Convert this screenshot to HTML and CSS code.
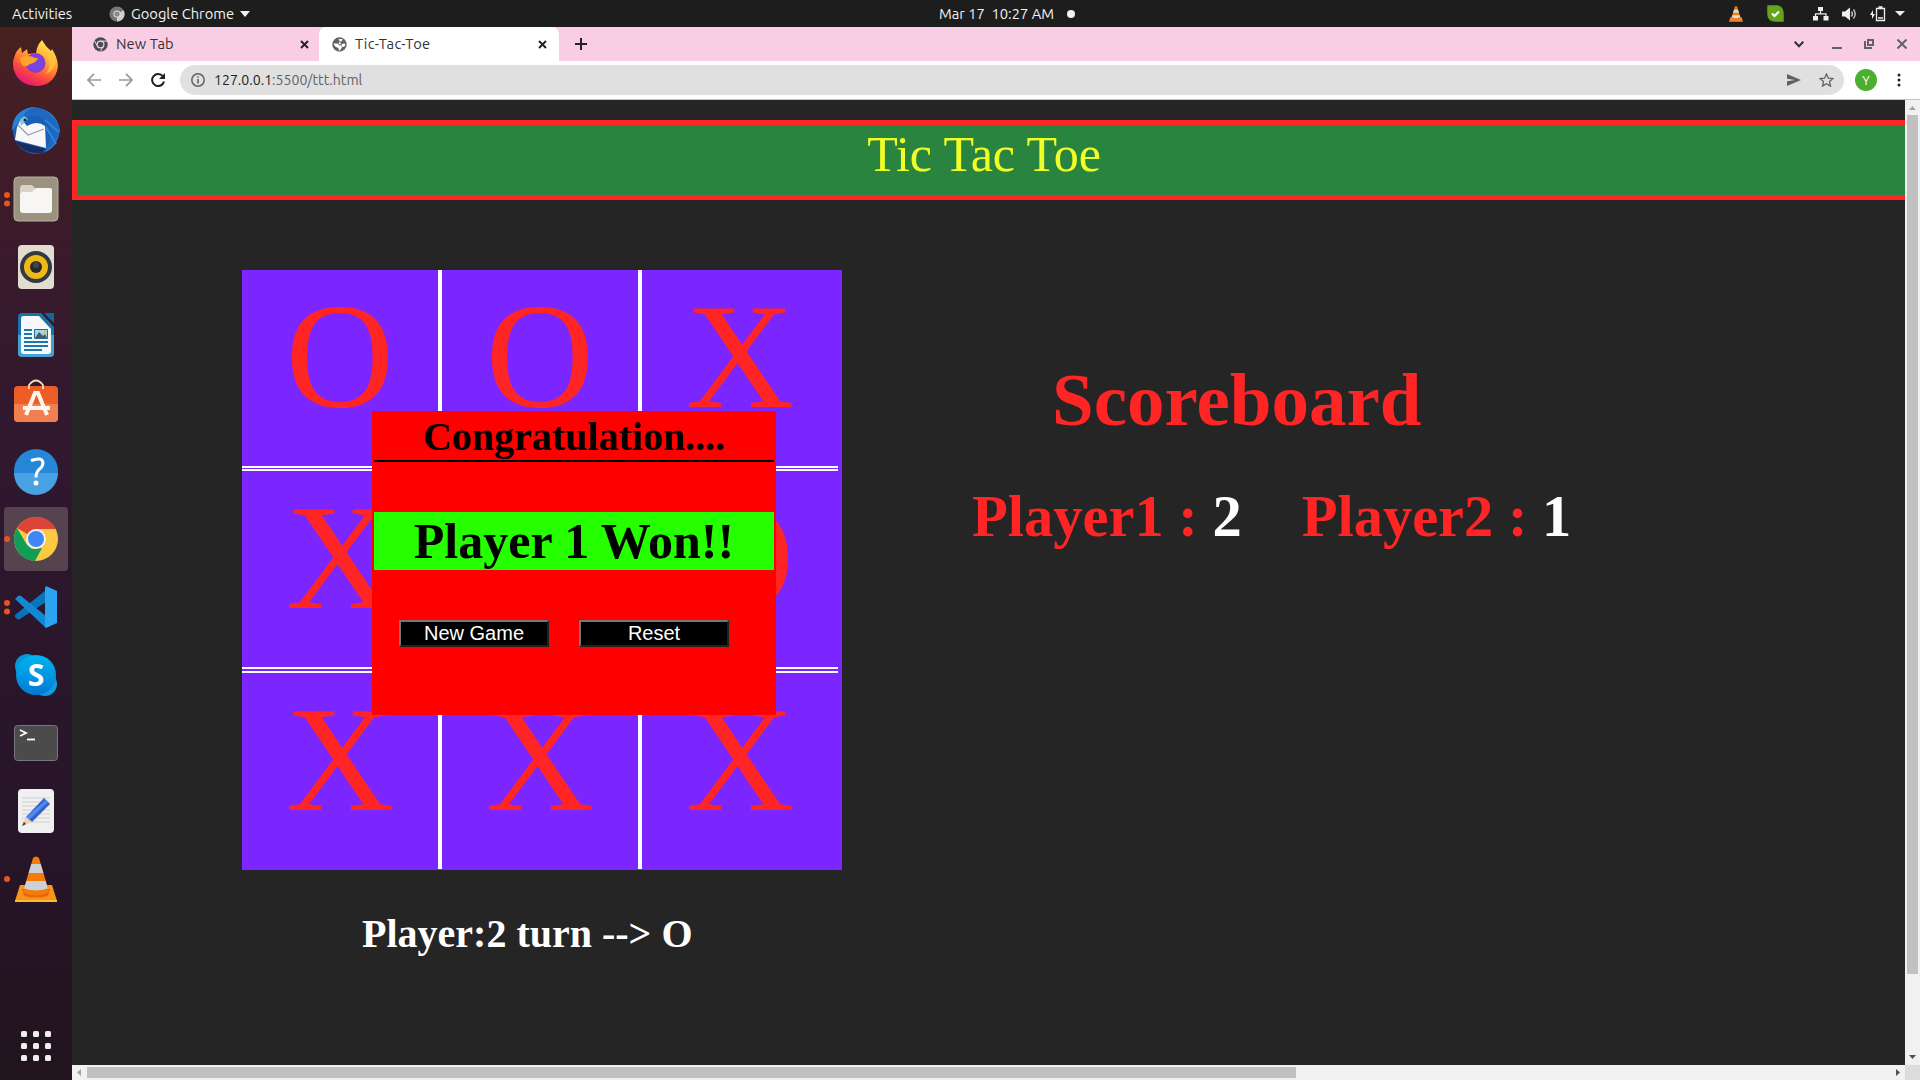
FILE: index.html
```html
<!DOCTYPE html>
<html lang="en">
<head>
<meta charset="utf-8">
<title>Tic-Tac-Toe</title>
<link rel="stylesheet" href="styles.css">
</head>
<body>
<div class="desktop">
  <header class="topbar">
    <span class="activities">Activities</span>
    <svg class="app-icon" width="16" height="16" viewBox="0 0 16 16"><circle cx="8" cy="8" r="7.6" fill="#777"/><path d="M8 8L14.6 4.3A7.6 7.6 0 0 1 8 15.6Z" fill="#d0d0d0"/><circle cx="8" cy="8" r="3.6" fill="#ddd"/><circle cx="8" cy="8" r="2.6" fill="#888"/></svg>
    <span class="app-name">Google Chrome</span>
    <svg class="caret" width="10" height="6" viewBox="0 0 10 6"><path d="M0 0h10L5 6z" fill="#f2f2f2"/></svg>
    <div class="clock"><span>Mar 17&nbsp; 10:27 AM</span><i class="dot"></i></div>
    <div class="tray">
      <svg width="14" height="16" viewBox="0 0 42 48"><path d="M4 34h34l4 13H0z" fill="#f58220"/><path d="M18 1h6l11 36q-14 6-28 0z" fill="#f07c12"/><path d="M15 11h12l3 9H12zM10 28h22l2 6q-13 5-26 0z" fill="#ddd"/></svg>
      <svg class="t-skype" width="17" height="17" viewBox="0 0 17 17"><path d="M1 1h9q6 1 6 8v7H9Q1 16 1 9z" fill="#64a51c" stroke="#64a51c" stroke-width="1.5" stroke-linejoin="round"/><path d="M5 8.5l2.5 2.5L12 6.5" fill="none" stroke="#fff" stroke-width="2"/></svg>
      <svg class="t-net" width="16" height="14" viewBox="0 0 16 14"><path d="M5 0h5v4H5zM0 9h5v4.500H0zM10.500 9h5v4.500h-5z" fill="#eee"/><path d="M7.500 4v3M2.500 9V6.800h10.500V9" fill="none" stroke="#eee" stroke-width="1.200"/></svg>
      <svg class="t-vol" width="16" height="14" viewBox="0 0 16 14"><path d="M0 4.500h3l5-4v13l-5-4H0z" fill="#eee"/><path d="M9.500 4.500q2 2.500 0 5M11.500 2.500q3.500 4.500 0 9" fill="none" stroke="#ccc" stroke-width="1.300"/></svg>
      <svg class="t-bat" width="16" height="16" viewBox="0 0 16 16"><path d="M3 4L0 9h2v4l3-5H3z" fill="#eee"/><path d="M6.500 2.500h8v12h-8zM8.500 1h4M8 12h5" fill="none" stroke="#eee" stroke-width="1.300"/></svg>
      <svg class="t-caret" width="10" height="5" viewBox="0 0 10 5"><path d="M0 0h10L5 5z" fill="#eee"/></svg>
    </div>
  </header>
  <div class="workspace">
    <nav class="dock">
      <div class="slot"><svg width="48" height="48" viewBox="0 0 48 48">
        <defs>
          <linearGradient id="fx" x1=".8" y1="0" x2=".3" y2="1"><stop offset="0" stop-color="#fff44f"/><stop offset=".4" stop-color="#ffa436"/><stop offset=".7" stop-color="#ff4e3a"/><stop offset="1" stop-color="#e3107f"/></linearGradient>
          <radialGradient id="fp"><stop offset="0" stop-color="#6a50e8"/><stop offset="1" stop-color="#8a3cd0"/></radialGradient>
        </defs>
        <path d="M3 16Q4 12 9 8l1 6 5-4 1 5 8-1Q25 6 30 1q3 6 9 11l1-2q8 12 5 22-5 15-21 15Q8 46 3 34-1 25 3 16z" fill="url(#fx)"/><circle cx="23.500" cy="24" r="10" fill="url(#fp)"/><path d="M8 19q8-4 15 0l3 0q-2 5-8 6-3 3-6 2-4-2-4-8z" fill="#ffa52c"/><path d="M33 15q9 11 0 20 12-3 10-18z" fill="#ffc83b" opacity=".7"/></svg></div>
      <div class="slot"><svg width="48" height="48" viewBox="0 0 48 48">
        <circle cx="24" cy="24" r="23" fill="#1b5eb5"/><path d="M0 24Q0 4 20 0q24 2 28 23-2 16-14 22 12-24-4-36Q14 4 0 24z" fill="#2b82d4"/><path d="M9 14q12-11 26 1 8 12-2 29Q48 36 47 20 38 0 20 1q-8 3-11 13z" fill="#1f68bf"/><path d="M33 13l14 12M34 20l10 17" stroke="#2e86d8" stroke-width="2"/><path d="M5 20l4-8 6 7q10-6 18 0l1 22L3 33z" fill="#f7f7f9"/><path d="M6 18l10 10 16-6" fill="none" stroke="#9a9da5" stroke-width="1.200"/><path d="M3 34l31 8-4 4Q12 48 3 34z" fill="#182b63"/><path d="M8 13l4-4 4 3-7 7z" fill="#7ac4ed"/><circle cx="13" cy="13" r="1.500" fill="#123"/></svg></div>
      <div class="slot"><i class="mark two"></i><svg width="48" height="48" viewBox="0 0 48 48">
        <rect x="2" y="2" width="44" height="44" rx="4" fill="#9b937f" stroke="#b8b19e"/><path d="M8 14q0-4 3-4h9l4 4h13q3 0 3 3v8H8z" fill="#d8d3c4"/><path d="M10 17h10l4-4h14q2 0 2 2v20q0 3-3 3H11q-3 0-3-3V19z" fill="#f7f6f3"/></svg></div>
      <div class="slot"><svg width="48" height="48" viewBox="0 0 48 48">
        <rect x="6" y="2" width="36" height="44" rx="4" fill="#e2ddd1"/><circle cx="24" cy="24" r="16" fill="#353a42"/><circle cx="24" cy="24" r="12" fill="#efba19"/><circle cx="24" cy="24" r="6" fill="#29292b"/><circle cx="24" cy="22" r="3" fill="#444"/></svg></div>
      <div class="slot"><svg width="48" height="48" viewBox="0 0 48 48">
        <path d="M10 2h19l13 14v26q0 4-4 4H10q-4 0-4-4V6q0-4 4-4z" fill="#1673ac"/><path d="M6 24h36v18q0 4-4 4H10q-4 0-4-4z" fill="#45a1d2"/><path d="M32 2h10v10z" fill="#12679d"/><path d="M11 5h16l12 13v22q0 3-3 3H12q-3 0-3-3V8q0-3 2-3z" fill="#f7f8f9"/><path d="M12 19h8M12 23h8M12 27h8M12 31h24M12 35h24M12 39h18" stroke="#1979af" stroke-width="2"/><path d="M22.500 18.500h13v9h-13z" fill="#9ed6f1" stroke="#196e9f"/><path d="M23 27l4-6 4 4 2-2 2 4z" fill="#555"/><circle cx="33" cy="21" r="1.500" fill="#f3c02c"/></svg></div>
      <div class="slot"><svg width="48" height="48" viewBox="0 0 48 48">
        <rect x="2" y="7" width="44" height="36" rx="4" fill="#ed5e27"/><path d="M2 25h44v14q0 4-4 4H6q-4 0-4-4z" fill="#f17f50"/><path d="M17 10V6q7-9 14 0v4" fill="none" stroke="#f4dfb4" stroke-width="1.800"/><path d="M14 36l9-22h3l9 22M11 29h27" fill="none" stroke="#fff6ee" stroke-width="4"/></svg></div>
      <div class="slot"><svg width="48" height="48" viewBox="0 0 48 48"><circle cx="24" cy="24" r="22" fill="#2686d8"/><path d="M2 26h44a22 22 0 0 1-44 0z" fill="#48a1e2"/><path d="M19 13.500q11-4 12 2 0 4-4 7-3 3-3 8" fill="none" stroke="#fff" stroke-width="3"/><circle cx="24" cy="36" r="2.500" fill="#fff"/></svg></div>
      <div class="slot active"><i class="mark"></i><svg width="48" height="48" viewBox="0 0 48 48">
        <circle cx="24" cy="24" r="22" fill="#fdc93e"/><path d="M24 24L5 13a22 22 0 0 1 39 1H24z" fill="#dc4437"/><path d="M5 13l10 17 5 4 10-1-7 13A22 22 0 0 1 5 13z" fill="#109d58"/><circle cx="24" cy="24" r="10" fill="#f3f3f3"/><circle cx="24" cy="24" r="8" fill="#4285f4"/></svg></div>
      <div class="slot"><i class="mark two"></i><svg width="48" height="48" viewBox="0 0 48 48"><path d="M3 32l31-25v12L8 36q-1 1-3 0l-2-2z" fill="#0873b8"/><path d="M3 16l3-3q2-1 3 0l25 20v12z" fill="#1287d2"/><path d="M34 3l11 5v32l-11 5q-1-1-1-3V5z" fill="#28a4f0"/></svg></div>
      <div class="slot"><svg width="48" height="48" viewBox="0 0 48 48"><defs><linearGradient id="sk" x2="0" y2="1"><stop offset="0" stop-color="#00b5f0"/><stop offset="1" stop-color="#0379d5"/></linearGradient></defs><circle cx="15" cy="15" r="12" fill="#0795d3"/><circle cx="33" cy="33" r="12" fill="#1399df"/><circle cx="24" cy="24" r="20" fill="url(#sk)"/><text x="24" y="35" class="skype-s">S</text></svg></div>
      <div class="slot"><svg width="48" height="48" viewBox="0 0 48 48"><rect x="2.500" y="6.500" width="43" height="35" rx="3" fill="#4b4b4b" stroke="#777"/><path d="M8 11l6 3-6 3" fill="none" stroke="#fff" stroke-width="1.800"/><path d="M15 20.500h8" stroke="#fff" stroke-width="1.800"/></svg></div>
      <div class="slot"><svg width="48" height="48" viewBox="0 0 48 48"><rect x="6" y="2" width="36" height="44" rx="4" fill="#f0f0f0"/><path d="M10 11h28M10 15h28M10 19h28M10 23h28M10 27h28M10 31h28M10 35h28" stroke="#cfcfcf"/><path d="M32 11l6 6-18 18-6-5z" fill="#3163c9"/><path d="M34 13l2 2-19 18-3-3z" fill="#5588eb"/><path d="M14 30l6 5-10 4z" fill="#efd2ad"/><path d="M12 35l2 2-4 2z" fill="#333"/></svg></div>
      <div class="slot"><i class="mark"></i><svg width="48" height="48" viewBox="0 0 48 48"><path d="M8 30h32l5 16H3z" fill="#fa9419"/><path d="M3 45h42v2H3z" fill="#ffbc31"/><path d="M10 34h28l-2 7q-12 3-24 0z" fill="#e46a05"/><path d="M21 3q3-3 6 0l10 34q-13 7-26 0z" fill="#f47b0b"/><path d="M19.300 9h9.400l2.700 9H16.600zM14.300 26h19.400l2 7.500q-12 4-23.500 0z" fill="#cbd1d6"/></svg></div>
      <div class="apps"><i></i><i></i><i></i><i></i><i></i><i></i><i></i><i></i><i></i></div>
    </nav>
    <main class="browser">
      <div class="tabs">
        <div class="tab"><svg width="15" height="15" viewBox="0 0 15 15"><circle cx="7.500" cy="7.500" r="7.200" fill="#4a4d51"/><circle cx="7.500" cy="7.500" r="3.400" fill="none" stroke="#f9cde3" stroke-width="1.200"/><path d="M7.500 4.100H14M4.600 9.200L1.400 3.800M10.400 9.200l-3.200 5.500" stroke="#f9cde3"/></svg><span>New Tab</span><svg class="x" width="9" height="9" viewBox="0 0 9 9"><path d="M1 1l7 7M8 1L1 8"/></svg></div>
        <div class="tab current"><svg width="15" height="15" viewBox="0 0 15 15"><circle cx="7.500" cy="7.500" r="7.200" fill="#5f6368"/><path d="M1.500 6.500h4l2 2h2l.5 2-2.500 3.500q-1-1-1-3-4-1-5-4.500zM6.500 2h4l-.5 2-2.500 1-1 2 3 .5 2-1 2 .5-1 2.500-2 .5" fill="#fff"/></svg><span>Tic-Tac-Toe</span><svg class="x" width="9" height="9" viewBox="0 0 9 9"><path d="M1 1l7 7M8 1L1 8"/></svg></div>
        <svg class="plus" width="12" height="12" viewBox="0 0 12 12"><path d="M6 0v12M0 6h12" stroke="#222" stroke-width="2"/></svg>
        <div class="window-controls">
          <svg width="10" height="7" viewBox="0 0 10 7"><path d="M.7.700L5 5.200 9.300.700" fill="none" stroke="#333" stroke-width="2"/></svg>
          <svg class="w-min" width="10" height="10" viewBox="0 0 10 10"><path d="M0 9h10" stroke="#5f6368" stroke-width="2"/></svg>
          <svg class="w-max" width="10" height="10" viewBox="0 0 10 10"><path d="M4 1h5v5H4zM1 2v7h7" fill="none" stroke="#5f6368" stroke-width="2"/></svg>
          <svg class="w-close" width="10" height="10" viewBox="0 0 10 10"><path d="M.5.500l9 9M9.500.500l-9 9" stroke="#5f6368" stroke-width="2"/></svg>
        </div>
      </div>
      <div class="toolbar">
        <svg width="14" height="14" viewBox="0 0 14 14"><path d="M14 7H1M7 .8L1 7l6 6.200" fill="none" stroke="#9a9a9a" stroke-width="1.700"/></svg>
        <svg class="fwd" width="14" height="14" viewBox="0 0 14 14"><path d="M0 7h13M7 .8L13 7l-6 6.200" fill="none" stroke="#9a9a9a" stroke-width="1.700"/></svg>
        <svg class="reload" width="14" height="14" viewBox="0 0 14 14"><path d="M12 3.500A6 6 0 1 0 13 8.500" fill="none" stroke="#222" stroke-width="2"/><path d="M14 0v6H8z" fill="#222"/></svg>
        <div class="omnibox">
          <svg width="14" height="14" viewBox="0 0 14 14"><circle cx="7" cy="7" r="6.200" fill="none" stroke="#5f6368" stroke-width="1.500"/><path d="M7 6v4.500M7 3.300v1.500" stroke="#5f6368" stroke-width="1.600"/></svg>
          <span class="url"><b>127.0.0.1</b>:5500/ttt.html</span>
          <svg class="send" width="14" height="12" viewBox="0 0 14 12"><path d="M0 0l14 6-14 6V7.300L8 6 0 4.700z" fill="#5f6368"/></svg>
          <svg class="star" width="15" height="14" viewBox="0 0 15 14"><path d="M7.500 1l1.900 4.200 4.600.4-3.500 3 1 4.500-4-2.400-4 2.400 1-4.500-3.500-3 4.600-.4z" fill="none" stroke="#5f6368" stroke-width="1.300"/></svg>
        </div>
        <span class="avatar">Y</span>
        <svg class="more" width="4" height="14" viewBox="0 0 4 14"><circle cx="2" cy="2" r="1.500"/><circle cx="2" cy="7" r="1.500"/><circle cx="2" cy="12" r="1.500"/></svg>
      </div>
      <div class="viewport">
        <div class="page">
          <h1 class="title">Tic Tac Toe</h1>
          <div class="game">
            <section class="play">
              <div class="board">
                <div class="cells row-a"><span>O</span><span>O</span><span>X</span></div>
                <div class="cells row-b"><span>X</span><span></span><span>O</span></div>
                <div class="cells row-c"><span>X</span><span>X</span><span>X</span></div>
                <div class="modal">
                  <div class="modal-title">Congratulation....</div>
                  <div class="winner">Player 1 Won!!</div>
                  <div class="buttons"><button>New Game</button><button>Reset</button></div>
                </div>
              </div>
              <div class="turn">Player:2 turn --&gt; O</div>
            </section>
            <section class="scores">
              <h2>Scoreboard</h2>
              <div class="players"><h3>Player1 : <span>2</span></h3><h3>Player2 : <span>1</span></h3></div>
            </section>
          </div>
        </div>
        <div class="vbar"><svg width="7" height="4" viewBox="0 0 7 4"><path d="M0 4h7L3.500 0z" fill="#a3a3a3"/></svg><i class="thumb"></i><svg class="end" width="7" height="4" viewBox="0 0 7 4"><path d="M0 0h7L3.500 4z" fill="#505050"/></svg></div>
        <div class="hbar"><svg width="4" height="7" viewBox="0 0 4 7"><path d="M4 0v7L0 3.500z" fill="#a3a3a3"/></svg><i class="thumb"></i><svg class="end" width="4" height="7" viewBox="0 0 4 7"><path d="M0 0v7l4-3.500z" fill="#505050"/></svg></div>
        <div class="corner"></div>
      </div>
    </main>
  </div>
</div>
</body>
</html>
```
FILE: styles.css
```css
* { box-sizing: border-box; }
body { margin: 0; overflow: hidden; }
svg { display: block; flex: none; }
.desktop { width: 1920px; height: 1080px; display: flex; flex-direction: column; font-family: "Ubuntu", "Noto Sans", sans-serif; }

.topbar { height: 27px; flex: none; background: #1d1d1d; color: #f2f2f2; display: flex; align-items: center; padding-left: 12px; font-size: 14.7px; line-height: 20px; position: relative; white-space: nowrap; }
.activities { width: 97px; }
.app-icon { margin-right: 6px; }
.app-name { width: 104px; }
.caret { margin-left: 5px; }
.clock { position: absolute; left: 939px; display: flex; align-items: center; }
.clock span { width: 128px; }
.dot { width: 8px; height: 8px; border-radius: 50%; background: #f2f2f2; }
.tray { margin-left: auto; display: flex; align-items: center; padding-right: 15px; }
.t-skype { margin-left: 24px; }
.t-net { margin-left: 29px; }
.t-vol { margin-left: 13px; }
.t-bat { margin-left: 12px; }
.t-caret { margin-left: 9px; }

.workspace { flex: 1; display: flex; min-height: 0; }
.dock { width: 72px; flex: none; display: flex; flex-direction: column; align-items: center; gap: 4px; padding-top: 3.5px; background: linear-gradient(#48201f 0, #3f1c28 140px, #381a2c 260px, #30182f 420px, #2b162b 600px, #27152a 800px, #22141d 1053px); }
.slot { width: 64px; height: 64px; flex: none; display: flex; align-items: center; justify-content: center; position: relative; border-radius: 4px; }
.slot.active { background: #564350; }
.mark { position: absolute; left: 0; top: 29px; width: 6px; height: 6px; border-radius: 50%; background: #e95420; }
.mark.two { top: 25px; box-shadow: 0 8.5px #e95420; }
.skype-s { font: bold 30px "Open Sans", sans-serif; fill: #fff; text-anchor: middle; }
.apps { margin-top: auto; margin-bottom: 19px; display: grid; grid-template-columns: repeat(3, 6px); gap: 6px; }
.apps i { width: 6px; height: 6px; border-radius: 1.5px; background: #eee; }

.browser { flex: 1; min-width: 0; display: flex; flex-direction: column; }
.tabs { height: 34px; flex: none; background: #f9cde3; display: flex; align-items: center; font-size: 14.7px; line-height: 20px; color: #333; }
.tab { height: 34px; width: 247px; display: flex; align-items: center; padding: 0 10px 0 21px; white-space: nowrap; }
.tab span { margin: 0 0 1px 8px; letter-spacing: 0.1px; }
.tab.current { width: 240px; padding-left: 13px; background: #fff; border-radius: 7px 7px 0 0; padding-right: 12px; }
.tab.current span { letter-spacing: 0.35px; }
.x { margin-left: auto; fill: none; stroke: #222; stroke-width: 1.9; }
.plus { margin-left: 16px; }
.window-controls { margin-left: auto; display: flex; align-items: center; padding-right: 13px; }
.w-min { margin-left: 28px; }
.w-max { margin-left: 22px; }
.w-close { margin-left: 23px; }

.toolbar { height: 39px; flex: none; background: #fff; border-bottom: 1px solid #c4c4c4; display: flex; align-items: center; padding: 0 19px 0 15px; }
.fwd { margin-left: 18px; }
.reload { margin-left: 18px; }
.omnibox { margin-left: 15px; flex: 1; height: 30px; border-radius: 15px; background: #e0e0e0; display: flex; align-items: center; padding: 0 10px 0 11px; }
.url { margin-left: 9px; font-size: 14.1px; line-height: 20px; color: #5f6368; }
.url b { font-weight: 400; color: #222; }
.send { margin-left: auto; }
.star { margin-left: 18px; }
.avatar { margin-left: 11px; width: 22px; height: 22px; border-radius: 50%; background: #4caf32; color: #fff; font-size: 13px; line-height: 22px; text-align: center; }
.more { margin-left: 20px; fill: #222; }

.viewport { flex: 1; min-height: 0; display: grid; grid-template: 965px 15px / 1833px 15px; }
.page { background: #252525; overflow: hidden; font-family: "Liberation Serif", serif; padding-top: 20px; }
.title { margin: 0; width: 1843px; height: 80px; border: 5px solid #ff2525; border-right: 0; background: #28843f; color: #f0ff25; font-size: 50px; font-weight: 400; text-align: center; padding-right: 24px; }
.game { display: flex; padding: 70px 0 0 170px; }
.board { width: 600px; height: 600px; background: #7b25ff; position: relative; }
.cells { display: flex; width: 596px; height: 198px; font-size: 150px; line-height: normal; color: #ff2525; text-align: center; }
.cells span { height: 198px; width: 200px; border-right: 4px solid #fff; }
.cells span:last-child { width: 196px; border-right: 0; }
.row-a { border-bottom: 2px solid #fff; }
.row-b { margin-top: 1px; height: 200px; border-top: 2px solid #fff; border-bottom: 2px solid #fff; }
.row-c { margin-top: 2px; border-top: 2px solid #fff; }
.row-c span { height: 196px; }
.modal { position: absolute; left: 130px; top: 141px; width: 404px; height: 304px; border: 2px solid #f00; background: #f00; text-align: center; font-weight: 700; color: #000; }
.modal-title { height: 49px; border-bottom: 2px solid #000; font-size: 40px; }
.winner { margin-top: 50px; height: 58px; background: #25ff00; font-size: 50px; }
.buttons { margin-top: 50px; display: flex; gap: 30px; padding-left: 25px; }
.buttons button { width: 150px; height: 27px; padding: 0; background: #000; color: #fff; border: 2px outset #767676; font: 20px/23px "Liberation Sans", sans-serif; }
.turn { margin: 40px 0 0 120px; font-size: 40px; font-weight: 700; color: #fff; white-space: nowrap; }
.scores { margin-left: 130px; color: #ff2525; }
.scores h2 { margin: 87px 0 0 80px; font-size: 75px; line-height: 86px; }
.players { margin-top: 40px; display: flex; gap: 60px; white-space: nowrap; }
.players h3 { margin: 0; font-size: 58.5px; line-height: 67px; }
.players span { color: #fff; }

.vbar { background: #f1f1f1; display: flex; flex-direction: column; align-items: center; padding: 6px 0; }
.vbar .thumb { width: 11px; height: 859px; margin-top: 5px; background: #c1c1c1; }
.hbar { background: #f1f1f1; display: flex; align-items: center; padding: 0 5px; }
.hbar .thumb { height: 11px; width: 1209px; margin-left: 6px; background: #c1c1c1; }
.end { margin-top: auto; }
.hbar .end { margin: 0 0 0 auto; }
.corner { background: #dcdcdc; }
```
